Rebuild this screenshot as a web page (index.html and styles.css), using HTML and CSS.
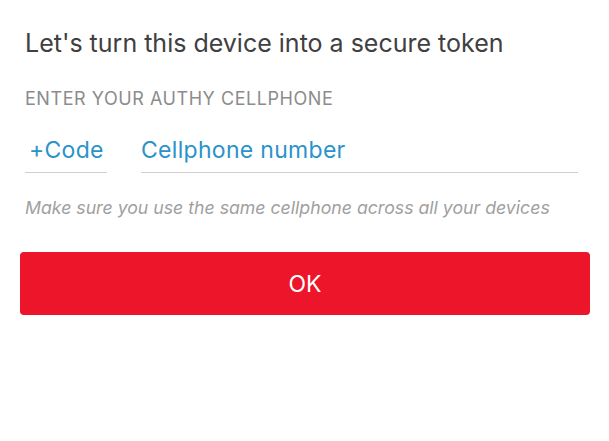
FILE: index.html
```html
<!DOCTYPE html>
<html lang="en">
<head>
<meta charset="utf-8">
<title>Authy</title>
<link rel="stylesheet" href="styles.css">
</head>
<body>
<main class="screen">
  <h1 class="title">Let's turn this device into a secure token</h1>
  <p class="label">ENTER YOUR AUTHY CELLPHONE</p>
  <div class="phone-row">
    <div class="field field-code">+Code</div>
    <div class="field field-number">Cellphone number</div>
  </div>
  <p class="hint">Make sure you use the same cellphone across all your devices</p>
  <button class="ok-button" type="button">OK</button>
</main>
</body>
</html>
```

FILE: styles.css
```css
html, body {
  margin: 0;
  padding: 0;
  background: #ffffff;
}

body {
  font-family: Inter, "Open Sans", "Liberation Sans", sans-serif;
  width: 609px;
  height: 441px;
  overflow: hidden;
}

.screen {
  display: flex;
  flex-direction: column;
  padding: 27px 31px 0 25px;
}

.title {
  margin: 0;
  font-size: 25px;
  line-height: 32px;
  font-weight: 400;
  color: #404040;
  white-space: nowrap;
}

.label {
  margin: 28px 0 0;
  font-size: 18px;
  line-height: 24px;
  letter-spacing: 0.55px;
  font-weight: 400;
  color: #8c8c8c;
  white-space: nowrap;
}

.phone-row {
  display: flex;
  gap: 34px;
  margin-top: 24px;
}

.field {
  font-size: 23px;
  line-height: 30px;
  letter-spacing: 0.3px;
  color: #2a93c9;
  border-bottom: 1px solid #cfcfcf;
  padding: 0 0 7px 0;
  white-space: nowrap;
}

.field-code {
  width: 82px;
  box-sizing: border-box;
  padding-left: 4px;
}

.field-number {
  flex: 1;
}

.hint {
  margin: 23px 0 0;
  font-size: 17.7px;
  line-height: 24px;
  font-style: italic;
  font-weight: 400;
  color: #a0a0a0;
  white-space: nowrap;
}

.ok-button {
  margin: 32px -12px 0 -5px;
  height: 63px;
  border: none;
  border-radius: 4px;
  background: #ec1529;
  color: #ffffff;
  font-family: inherit;
  font-size: 23px;
  font-weight: 400;
  cursor: pointer;
}
```
